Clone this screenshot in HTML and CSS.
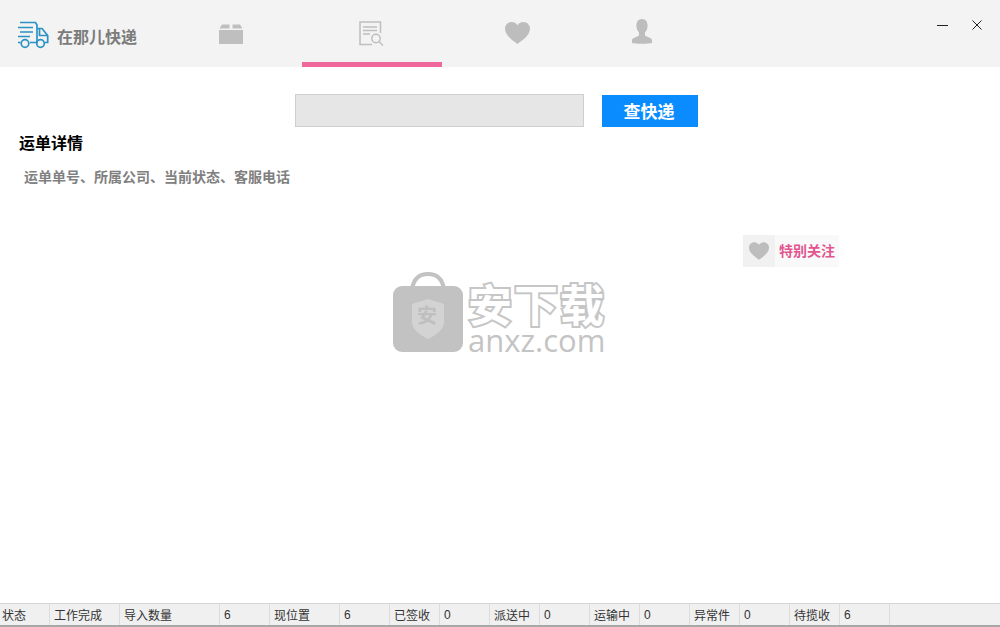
FILE: index.html
```html
<!DOCTYPE html>
<html lang="zh-CN">
<head>
    <meta charset="UTF-8">
    <title>在那儿快递</title>
    <link rel="stylesheet" href="styles.css">
</head>
<body>
    <header class="topbar">
        <div class="brand">
            <svg class="brand-icon" width="32" height="28" viewBox="0 0 32 28" fill="none" stroke="#2b93c4" stroke-width="1.700">
                <path d="M3 1.500H18.500L20 4V21.500H13"/>
                <path d="M20 7.500H25L30.700 14.500V21.500H27.500"/>
                <path d="M22.500 8V14.500H30.500"/>
                <path d="M1 6.500H16M3 11H16M1 15.500H13"/>
                <path d="M1 21.500H3.500M19 21.500H20"/>
                <circle cx="8" cy="22.500" r="3.800"/>
                <circle cx="23.500" cy="22.500" r="3.800"/>
            </svg>
            <span class="brand-name">在那儿快递</span>
        </div>
        <nav class="tabs">
            <div class="tab tab-box">
                <svg width="24" height="20" viewBox="0 0 24 20" fill="#bfbfbf">
                    <path d="M0 6H24V20H0Z"/>
                    <path d="M3 .5H10.500V4.500H0.500ZM13.500 .5H21L23.500 4.500H13.500Z"/>
                </svg>
            </div>
            <div class="tab tab-query active">
                <svg width="25" height="25" viewBox="0 0 25 25" fill="none" stroke="#bfbfbf" stroke-width="1.500">
                    <path d="M13 23.500H1V1H21.500V12"/>
                    <path d="M4 6H18M4 9.500H18M4 13H11"/>
                    <circle cx="17" cy="17.500" r="4.200"/>
                    <path d="M20 20.500L24 24.500"/>
                </svg>
            </div>
            <div class="tab tab-fav">
                <svg width="25" height="22" viewBox="0 0 25 22" fill="#bdbdbd">
                    <path d="M12.500 22C9 19 0 14 0 6.800C0 2.800 3 0 6.500 0C9 0 11.200 1.200 12.500 3.200C13.800 1.200 16 0 18.500 0C22 0 25 2.800 25 6.800C25 14 16 19 12.500 22Z"/>
                </svg>
            </div>
            <div class="tab tab-user">
                <svg width="20" height="25" viewBox="0 0 20 25" fill="#bdbdbd">
                    <path d="M10 0C13.500 0 15.600 2.800 15.600 6.500C15.600 9.500 14.600 11.800 13 13.500V15.800C13 16.800 14 17.300 16 18C18.500 18.900 20 19.800 20 21V24C17 25 3 25 0 24V21C0 19.800 1.500 18.900 4 18C6 17.300 7 16.800 7 15.800V13.500C5.400 11.800 4.400 9.500 4.400 6.500C4.400 2.800 6.500 0 10 0Z"/>
                </svg>
            </div>
        </nav>
        <div class="win-controls">
            <span class="win-min"></span>
            <svg width="10" height="10" viewBox="0 0 10 10" stroke="#222" stroke-width="1" fill="none">
                <path d="M.5 .5L9.500 9.500M9.500 .5L.5 9.500"/>
            </svg>
        </div>
    </header>

    <main class="content">
        <div class="search-row">
            <input class="search-input" type="text">
            <button class="search-btn">查快递</button>
        </div>
        <h2 class="detail-title">运单详情</h2>
        <p class="detail-desc">运单单号、所属公司、当前状态、客服电话</p>
        <div class="follow-row">
            <div class="follow">
                <span class="follow-icon">
                    <svg width="20" height="18" viewBox="0 0 25 22" fill="#bdbdbd">
                        <path d="M12.500 22C9 19 0 14 0 6.800C0 2.800 3 0 6.500 0C9 0 11.200 1.200 12.500 3.200C13.800 1.200 16 0 18.500 0C22 0 25 2.800 25 6.800C25 14 16 19 12.500 22Z"/>
                    </svg>
                </span>
                <span class="follow-text">特别关注</span>
            </div>
        </div>

        <div class="watermark">
            <svg class="wm-bag" width="72" height="82" viewBox="0 0 72 82">
                <path d="M20 17C22 5 29 2 36 2C43 2 50 5 52 17" fill="none" stroke="#c2c2c2" stroke-width="4"/>
                <rect x="1" y="14" width="70" height="66" rx="9" fill="#c2c2c2"/>
                <path d="M36 27L52 32V50C52 58 44 63 36 67C28 63 20 58 20 50V32Z" fill="#d3d3d3"/>
            </svg>
            <span class="wm-bag-char">安</span>
            <div class="wm-text">
                <div class="wm-cn">安下载</div>
                <div class="wm-en">anxz.com</div>
            </div>
        </div>
    </main>

    <footer class="statusbar">
        <div class="cell cell-first w50">状态</div>
        <div class="cell w70">工作完成</div>
        <div class="cell w100">导入数量</div>
        <div class="cell w50">6</div>
        <div class="cell w70">现位置</div>
        <div class="cell w50">6</div>
        <div class="cell w50">已签收</div>
        <div class="cell w50">0</div>
        <div class="cell w50">派送中</div>
        <div class="cell w50">0</div>
        <div class="cell w50">运输中</div>
        <div class="cell w50">0</div>
        <div class="cell w50">异常件</div>
        <div class="cell w50">0</div>
        <div class="cell w50">待揽收</div>
        <div class="cell w50">6</div>
    </footer>
</body>
</html>
```

FILE: styles.css
```css
* {
    box-sizing: border-box;
}
html, body {
    height: 100%;
}
body {
    margin: 0;
    height: 627px;
    overflow: hidden;
    display: flex;
    flex-direction: column;
    background: #fff;
    font-family: "Liberation Sans", "Noto Sans CJK SC", sans-serif;
    color: #333;
}

/* top bar */
.topbar {
    height: 67px;
    flex: none;
    display: flex;
    background: #f3f3f3;
}
.brand {
    width: 182px;
    flex: none;
    display: flex;
    align-items: center;
    padding: 5px 0 0 17px;
}
.brand-icon {
    flex: none;
    margin-top: -2px;
}
.brand-name {
    margin-left: 8px;
    font-size: 16px;
    font-weight: bold;
    color: #7b7b7b;
}
.tabs {
    display: flex;
}
.tab {
    height: 67px;
    display: flex;
    justify-content: center;
    padding-top: 21px;
}
.tab-box {
    width: 120px;
    margin-left: -11px;
    margin-right: 11px;
    padding-top: 24px;
}
.tab-query {
    width: 140px;
    padding: 21px 2px 0 0;
    border-bottom: 5px solid #f0689b;
}
.tab-fav {
    width: 150px;
    padding-top: 22px;
}
.tab-user {
    width: 100px;
    padding-top: 19px;
}
.win-controls {
    margin-left: auto;
    display: flex;
    align-items: center;
    gap: 24px;
    height: 50px;
    padding-right: 18px;
}
.win-min {
    width: 11px;
    height: 1px;
    background: #222;
}

/* main area */
.content {
    position: relative;
    flex: 1;
    padding-top: 27px;
}
.search-row {
    display: flex;
    align-items: flex-end;
    padding-left: 295px;
    gap: 18px;
}
.search-input {
    width: 289px;
    height: 33px;
    background: #e6e6e6;
    border: 1px solid #cfcfcf;
    padding: 0;
}
.search-btn {
    width: 96px;
    height: 32px;
    border: none;
    background: #0a8cff;
    color: #fff;
    font-family: inherit;
    font-size: 17px;
    font-weight: bold;
    padding: 0 2px 2px 0;
}
.detail-title {
    margin: 5px 0 0 19px;
    font-size: 16px;
    line-height: 24px;
    font-weight: bold;
    color: #000;
}
.detail-desc {
    margin: 11px 0 0 24px;
    font-size: 14px;
    line-height: 20px;
    font-weight: bold;
    color: #808080;
}
.follow-row {
    display: flex;
    padding: 48px 0 0 743px;
}
.follow {
    display: flex;
    align-items: center;
    width: 96px;
    height: 32px;
    background: #f9f9f9;
}
.follow-icon {
    width: 32px;
    height: 32px;
    flex: none;
    display: flex;
    align-items: center;
    justify-content: center;
    background: #f1f1f1;
}
.follow-text {
    margin: 0 0 2px 4px;
    font-size: 14px;
    font-weight: bold;
    color: #e2558f;
}

/* watermark sits over the content */
.watermark {
    position: absolute;
    left: 392px;
    top: 205px;
    display: flex;
}
.wm-bag-char {
    position: absolute;
    left: 25px;
    top: 33px;
    font-size: 20px;
    line-height: 22px;
    font-weight: bold;
    color: #bfbfbf;
}
.wm-text {
    margin-left: 4px;
}
.wm-cn {
    margin-top: 13px;
    width: 140px;
    height: 44px;
    font-size: 44px;
    line-height: 44px;
    letter-spacing: 2px;
    font-weight: bold;
    white-space: nowrap;
    color: #fff;
    -webkit-text-stroke: 4px #c6c6c6;
    paint-order: stroke fill;
}
.wm-en {
    margin-top: -1px;
    font-family: "Open Sans", sans-serif;
    font-size: 31px;
    line-height: 24px;
    color: #c4c4c4;
}

/* status bar */
.statusbar {
    height: 24px;
    flex: none;
    display: flex;
    background: #f0f0f0;
    border-top: 1px solid #d4d4d4;
    border-bottom: 2px solid #a8a8a8;
}
.cell {
    display: flex;
    align-items: center;
    padding-left: 4px;
    border-right: 1px solid #dcdcdc;
    font-size: 12px;
    color: #333;
    white-space: nowrap;
}
.cell-first {
    padding-left: 2px;
}
.w50 {
    width: 50px;
}
.w70 {
    width: 70px;
}
.w100 {
    width: 100px;
}
```
